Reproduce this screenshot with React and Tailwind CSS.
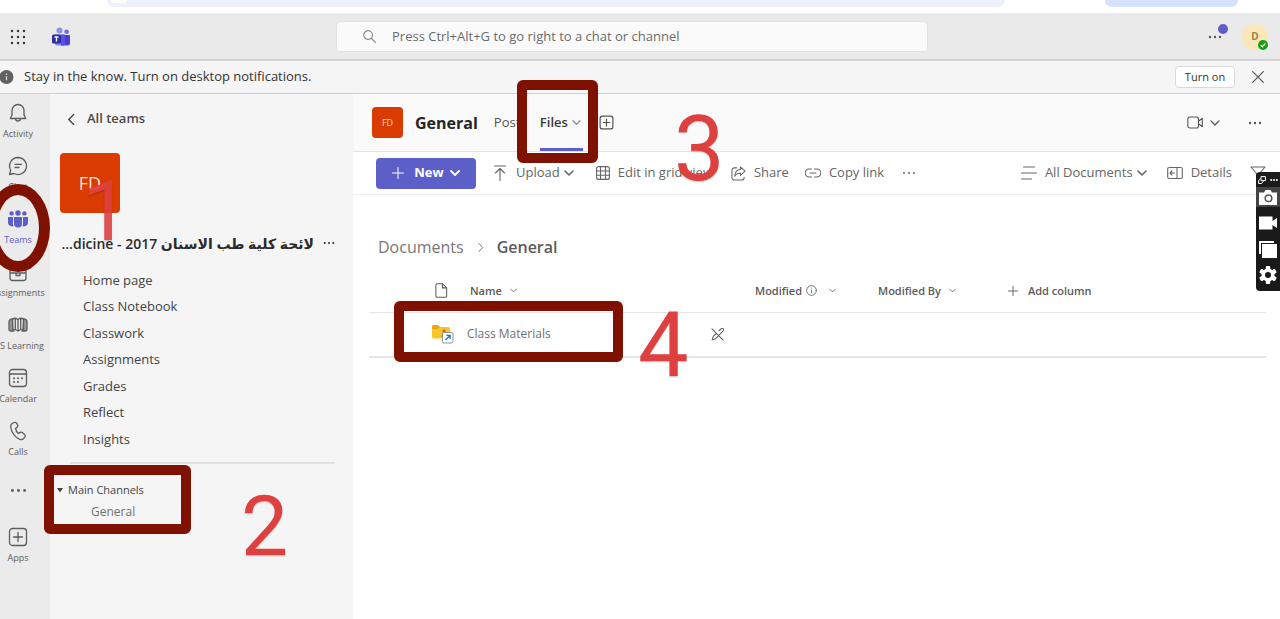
import clsx from "clsx";

const Icon = ({ size = 18, box = 20, sw = 1.2, className, children }) => (
    <svg
        width={size}
        height={size}
        viewBox={`0 0 ${box} ${box}`}
        fill="none"
        stroke="currentColor"
        strokeWidth={sw}
        strokeLinecap="round"
        strokeLinejoin="round"
        aria-hidden="true"
        className={clsx("shrink-0", className)}
    >
        {children}
    </svg>
)

const ChevronDown = ({ size = 10, sw = 1.2, className }) => (
    <Icon size={size} box={10} sw={sw} className={className}>
        <path d="M1 3l4 4 4-4"/>
    </Icon>
)

const Dots = ({ size = 14, r = 1.2, className }) => (
    <svg width={size} height={size} viewBox="0 0 14 14" fill="currentColor" aria-hidden="true"
         className={clsx("shrink-0", className)}>
        <circle cx="2" cy="7" r={r}/>
        <circle cx="7" cy="7" r={r}/>
        <circle cx="12" cy="7" r={r}/>
    </svg>
)

const PlusBox = ({ size, sw = 1.3 }) => (
    <Icon size={size} sw={sw}>
        <rect x="1.5" y="1.5" width="17" height="17" rx="3"/>
        <path d="M10 5.5v9M5.5 10h9"/>
    </Icon>
)

const WaffleIcon = () => (
    <svg width="16" height="16" viewBox="0 0 16 16" fill="#333" aria-hidden="true">
        {[2, 8, 14].map((y) => [2, 8, 14].map((x) => <circle key={`${x}-${y}`} cx={x} cy={y} r="1.2"/>))}
    </svg>
)

const TeamsLogo = () => (
    <svg width="18" height="19" viewBox="0 0 18 19" aria-hidden="true">
        <circle cx="7.5" cy="3.4" r="3" fill="#8b8ff0"/>
        <circle cx="14.6" cy="4.8" r="2.3" fill="#6a6ce8"/>
        <path d="M9 8h8a1 1 0 011 1v7a2.500 2.500 0 01-2.500 2.500H9z" fill="#4a3fd4"/>
        <path d="M3 7.500h9a1 1 0 011 1v8a2 2 0 01-2 2H5a2 2 0 01-2-2z" fill="#8a80f8"/>
        <path d="M9 7.500h3a1 1 0 011 1v8a2 2 0 01-2 2H9z" fill="#5b50e6"/>
        <rect x="0" y="7.500" width="9" height="9" rx="1.5" fill="#2c2f9e"/>
        <path d="M2.500 10h4M4.500 10v4.500" stroke="#fff" strokeWidth="1.4"/>
    </svg>
)

const rail = [
    {
        label: "Activity",
        icon: <path d="M10 1.500a6 6 0 00-6 6V12l-1.700 3.500h15.400L16 12V7.500a6 6 0 00-6-6zM7.500 15.500a2.500 2.500 0 005 0"/>,
    },
    {
        label: "Chat",
        icon: <path d="M10 1.500a8.500 8.500 0 11-4 16L1.500 18.500l1.200-4.300A8.500 8.500 0 0110 1.500zM7 8.300h6.500M7 11.500h4"/>,
    },
    {
        label: "Teams",
        active: true,
        icon: (
            <g fill="currentColor" stroke="none">
                <circle cx="10" cy="4" r="2.7"/>
                <circle cx="3.600" cy="4.400" r="2.200"/>
                <circle cx="16.400" cy="4.400" r="2.200"/>
                <path d="M6 8h8v6.500a4 4 0 01-8 0z"/>
                <path d="M0 8h5v6.500a5 5 0 00.5 2.500A3.900 3.900 0 010 13zM20 8h-5v6.500a5 5 0 01-.5 2.500A3.900 3.900 0 0020 13z"/>
            </g>
        ),
    },
    {
        label: "Assignments",
        icon: <path d="M4.500 1.500h11a2.500 2.500 0 012.500 2.500v12a2.500 2.500 0 01-2.500 2.500h-11A2.500 2.500 0 012 16V4a2.500 2.500 0 012.500-2.500zM2 11h16M8 11v2.500h4V11M6 5.500h8"/>,
    },
    {
        label: "MS Learning",
        icon: (
            <>
                <path d="M5 4a3 3 0 00-4 3v7a2 2 0 002 2h3M15 4a3 3 0 014 3v7a2 2 0 01-2 2h-3" fill="#999"/>
                <path d="M10 4.500C8 3 6 3 4.500 4v11c2-.7 4-.5 5.500 1 1.500-1.500 3.500-1.700 5.500-1V4C14 3 12 3 10 4.500zM10 4.500V16M7.300 4v10.500M12.700 4v10.500"/>
            </>
        ),
    },
    {
        label: "Calendar",
        icon: (
            <>
                <rect x="1.500" y="1.500" width="17" height="17" rx="3"/>
                <path d="M1.500 6h17"/>
                <path d="M6 10.200h.01M10 10.200h.01M14 10.200h.01M6 14h.01M10 14h.01" strokeWidth="2"/>
            </>
        ),
    },
    {
        label: "Calls",
        icon: <path d="M6.500 1.500l-1.800.6C3 2.700 2.500 4.500 2.800 6.500c1 5.500 4.500 9.800 9 11.800 1.500.6 3 .2 4-1l1-1.200c.6-.8.500-1.800-.2-2.500l-2.300-2c-.6-.5-1.400-.6-2.100-.2l-1.800 1C8.700 11 7.800 9.400 7.600 7.600l1.500-1.300c.6-.5.800-1.300.6-2l-.8-1.700c-.4-.9-1.400-1.400-2.400-1.100z"/>,
    },
]

const RailItem = ({ item }) => (
    <a href="#" className={clsx(
        "flex h-[53px] w-full flex-col items-center gap-[3px] whitespace-nowrap text-[9px] leading-4",
        item.active ? "text-[#5b5fc7]" : "text-[#5c5c5c]"
    )}>
        <Icon size={20} sw={1.3}>{item.icon}</Icon>
        <span>{item.label}</span>
    </a>
)

const Rail = () => (
    <nav className="w-[50px] shrink-0 overflow-hidden bg-[#ebebeb] pt-[9px]">
        <div className="flex w-9 flex-col items-center">
            {rail.map((item) => <RailItem key={item.label} item={item}/>)}
            <button type="button" aria-label="More apps" className="flex h-[53px] flex-col items-center pt-2 text-[#5c5c5c]">
                <Dots size={17}/>
            </button>
            <a href="#" className="flex flex-col items-center gap-[3px] text-[9px] leading-4 text-[#5c5c5c]">
                <PlusBox size={20}/>
                <span>Apps</span>
            </a>
        </div>
    </nav>
)

const pages = ["Home page", "Class Notebook", "Classwork", "Assignments", "Grades", "Reflect", "Insights"]

const Sidebar = () => (
    <aside className="w-[303px] shrink-0 bg-[#f5f5f5] pt-[13px]">
        <a href="#" className="flex h-6 items-center gap-[10px] pl-4 text-[13px] font-semibold text-[#4a4a4a]">
            <Icon size={11} box={10} sw={1.3}><path d="M7 0.500L2.500 5 7 9.500"/></Icon>
            All teams
        </a>
        <div className="mt-[22px] ml-[10px] flex size-[60px] items-center justify-center rounded-sm bg-[#da3b01] text-lg text-[#fbe3da]">
            FD
        </div>
        <div className="mt-[18px] flex h-6 items-center justify-between pr-[18px] pl-[14px] text-[#333]">
            <h2 dir="rtl" className="w-[250px] whitespace-nowrap text-[14px] font-semibold text-[#2b2b2b]">
                لائحة كلية طب الاسنان 2017 - dicine...
            </h2>
            <button type="button" aria-label="More options"><Dots size={12}/></button>
        </div>
        <ul className="mt-[13px] flex flex-col pl-[33px] text-[13px] text-[#444]">
            {pages.map((p) => (
                <li key={p} className="flex h-[26px] items-center even:mb-px">
                    <a href="#">{p}</a>
                </li>
            ))}
        </ul>
        <hr className="mt-[9px] mr-[18px] ml-5 border-t-2 border-[#e2e2e2]"/>
        <div className="mt-4 pl-[6px]">
            <button type="button" className="flex h-5 items-center gap-1 text-[11px] text-[#444]">
                <svg width="8" height="8" viewBox="0 0 8 8" fill="currentColor" aria-hidden="true"><path d="M1 2h6L4 6.500z"/></svg>
                Main Channels
            </button>
            <a href="#" className="ml-[35px] flex h-6 items-center text-[12px] text-[#707070]">General</a>
        </div>
    </aside>
)

const ChannelHeader = () => (
    <header className="flex h-[58px] items-center border-b border-[#e3e3e3] bg-[#fafafa] pr-[18px] pl-[19px] text-[#555]">
        <div className="flex size-[31px] items-center justify-center rounded-sm bg-[#da3b01] text-[9px] text-[#fbd5c7]">FD</div>
        <h1 className="ml-3 text-[16px] font-bold text-[#252525]">General</h1>
        <nav className="ml-4 flex h-full items-center text-[13px]">
            <a href="#" className="w-[46px]">Posts</a>
            <a href="#" className="flex h-full items-center gap-1 border-b-[3px] border-[#5b5fc7] pt-[3px] pr-[2px] font-semibold text-[#3a3a3a]">
                Files
                <ChevronDown size={9} className="text-[#777]"/>
            </a>
        </nav>
        <button type="button" aria-label="Add a tab" className="ml-4"><PlusBox size={15} sw={1.6}/></button>
        <button type="button" aria-label="Meet now" className="ml-auto flex items-center gap-[6px]">
            <Icon size={17} sw={1.3}>
                <rect x="1" y="3.500" width="12.500" height="13" rx="2.500"/>
                <path d="M13.500 8.500l4.500-3.500v10l-4.500-3.500"/>
            </Icon>
            <ChevronDown/>
        </button>
        <button type="button" aria-label="More options" className="ml-7"><Dots/></button>
    </header>
)

const Toolbar = () => (
    <div className="flex h-[43px] items-center whitespace-nowrap border-b border-[#efefef] bg-white pl-[23px] text-[13px] text-[#666]">
        <button type="button" className="flex h-[31px] w-[100px] items-center justify-center gap-[10px] rounded-sm bg-[#5b5fc7] font-bold text-white">
            <Icon size={12} box={12} sw={1}><path d="M6 0.500v11M0.500 6h11"/></Icon>
            New
            <ChevronDown sw={1.8} className="-ml-1"/>
        </button>
        <button type="button" className="ml-4 flex items-center gap-2">
            <Icon size={16} box={16} sw={1.1}><path d="M2.500 1h11M8 15.500V4M3.500 8L8 3.500 12.500 8"/></Icon>
            Upload
            <ChevronDown sw={1.6} className="-ml-1"/>
        </button>
        <button type="button" className="ml-[22px] flex items-center gap-2">
            <Icon size={14} box={14} sw={1.1}>
                <rect x="0.600" y="0.600" width="12.800" height="12.800" rx="2"/>
                <path d="M4.500 .6v12.800M9.500 .6v12.800M.6 5h12.800M.6 9.300h12.800"/>
            </Icon>
            Edit in grid view
        </button>
        <button type="button" className="ml-[18px] flex items-center gap-2">
            <Icon size={15} box={16} sw={1.1}>
                <path d="M6 2H3.500A2.500 2.500 0 001 4.500v8A2.500 2.500 0 003.500 15h8a2.500 2.500 0 002.500-2.500V12"/>
                <path d="M10 1l5 4.500-5 4.500V7.500C7 7.500 5.500 8.500 4 11c.2-4 2-7 6-7.300z"/>
            </Icon>
            Share
        </button>
        <button type="button" className="ml-4 flex items-center gap-2">
            <Icon size={16} box={16} sw={1.1}>
                <path d="M6.500 4H4.200a4 4 0 000 8h2.300M9.500 4h2.300a4 4 0 010 8H9.500M5 8h6"/>
            </Icon>
            Copy link
        </button>
        <button type="button" aria-label="More commands" className="ml-[18px]"><Dots r={1}/></button>
        <button type="button" className="ml-auto flex items-center gap-2">
            <Icon size={16} box={16} sw={1.1}><path d="M2.500 2h11M.5 8h15M.5 14h10"/></Icon>
            All Documents
            <ChevronDown sw={1.6} className="-ml-1"/>
        </button>
        <button type="button" className="ml-5 flex items-center gap-2">
            <Icon size={16} box={16} sw={1.1}>
                <rect x="0.700" y="2.500" width="14.600" height="11" rx="1.500"/>
                <path d="M10 2.500v11M7.500 8H3M5 6L3 8l2 2"/>
            </Icon>
            Details
        </button>
        <button type="button" aria-label="Filter" className="ml-[18px] mr-[14px]">
            <Icon size={16} box={16} sw={1.1}><path d="M1 2h14L9.500 8.500V14l-3-2V8.500z"/></Icon>
        </button>
    </div>
)

const FolderIcon = () => (
    <svg width="24" height="20" viewBox="0 0 24 20" aria-hidden="true">
        <path d="M1 2.500A1.500 1.500 0 012.500 1h4L9 3h8.500A1.500 1.500 0 0119 4.500V13a1.500 1.500 0 01-1.500 1.500h-15A1.500 1.500 0 011 13z" fill="#fbc62b"/>
        <path d="M1 2.500A1.500 1.500 0 012.500 1h4L9 3 7 5H1z" fill="#eba616"/>
        <circle cx="13" cy="7" r="1.700" fill="#b87a12"/>
        <path d="M10.500 13c0-5 5-5 5 0z" fill="#b87a12"/>
        <rect x="11.500" y="8.500" width="10.500" height="10.500" rx="1.500" fill="#fff" stroke="#8c9299"/>
        <path d="M14.500 16l4.500-4.500M15.500 11.300h3.700V15" stroke="#2573b8" strokeWidth="1.300" fill="none"/>
    </svg>
)

const FileList = () => (
    <section className="pr-[14px] pl-4">
        <nav aria-label="Breadcrumb" className="mt-10 flex h-6 items-center gap-3 pl-[9px] text-[16px] text-[#777]">
            <a href="#">Documents</a>
            <Icon size={9} box={10} sw={1.1}><path d="M3 .5L7.500 5 3 9.500"/></Icon>
            <span className="font-semibold text-[#5a5a5a]">General</span>
        </nav>
        <table className="mt-[11px] w-full table-fixed text-left text-[11px] text-[#5a5a5a]">
            <thead>
                <tr className="h-[42px] border-b border-[#e6e6e6]">
                    <th className="w-[98px] pl-[65px]">
                        <Icon size={15} box={16} sw={1.100}>
                            <path d="M3.500 .7h5.500l4.500 4.500v8.600a1.500 1.500 0 01-1.500 1.500H3.500A1.500 1.500 0 012 13.800V2.200A1.500 1.500 0 013.500 .7zM9 .7v4.500h4.500"/>
                        </Icon>
                    </th>
                    <th className="w-[240px] pl-[3px] font-semibold">
                        <span className="flex items-center gap-2">Name <ChevronDown size={7}/></span>
                    </th>
                    <th className="w-12"><span className="sr-only">Editing</span></th>
                    <th className="w-[123px] font-semibold">
                        <span className="flex items-center gap-1">
                            Modified
                            <Icon size={11} box={12} sw={0.9}><circle cx="6" cy="6" r="5.300"/><path d="M6 5.500v3M6 3.500h.01"/></Icon>
                            <ChevronDown size={7} className="ml-2"/>
                        </span>
                    </th>
                    <th className="w-[130px] font-semibold">
                        <span className="flex items-center gap-2">Modified By <ChevronDown size={7}/></span>
                    </th>
                    <th className="font-semibold">
                        <button type="button" className="flex items-center gap-[10px]">
                            <Icon size={10} box={10} sw={0.9}><path d="M5 .5v9M.5 5h9"/></Icon>
                            Add column
                        </button>
                    </th>
                </tr>
            </thead>
            <tbody>
                <tr className="h-[45px] border-b-2 border-[#e6e6e6]">
                    <td className="pl-[62px]"><FolderIcon/></td>
                    <td className="text-[12px] text-[#707070]"><a href="#">Class Materials</a></td>
                    <td>
                        <Icon size={13} box={14} sw={1.1} className="ml-1">
                            <path d="M1 1l12 12M8.500 3L11 .8a1.500 1.500 0 012.200 2.200L5 11.500 1.200 12.800 2.500 9 5.500 6"/>
                        </Icon>
                    </td>
                    <td/>
                    <td/>
                    <td/>
                </tr>
            </tbody>
        </table>
    </section>
)

const Recorder = () => (
    <div className="absolute top-[172px] right-0 flex w-6 flex-col items-center rounded-l-sm bg-[#1a1a1a] pb-1 text-white">
        <div className="flex h-[15px] items-center gap-1">
            <svg width="8" height="8" viewBox="0 0 8 8" fill="none" stroke="currentColor" aria-hidden="true"><path d="M3 .6h4.400v4H3zM3 2.500L.6 4.500v3h3L5.500 5"/></svg>
            <Dots size={8} r={1.8}/>
        </div>
        <button type="button" aria-label="Take a photo" className="flex h-5 w-full items-center justify-center bg-[#444]">
            <svg width="18" height="15" viewBox="0 0 18 15" aria-hidden="true">
                <path d="M0 2.500h5L6.500 0h5L13 2.500h5V15H0z" fill="#fff"/>
                <circle cx="9.500" cy="8.300" r="3.300" fill="#fff" stroke="#555" strokeWidth="1.500"/>
            </svg>
        </button>
        <button type="button" aria-label="Record video" className="flex h-8 items-center">
            <svg width="18" height="14" viewBox="0 0 18 14" fill="#fff" aria-hidden="true"><path d="M0 .5h13.500V5L18 2v10l-4.500-3v4.500H0z"/></svg>
        </button>
        <button type="button" aria-label="Gallery" className="flex h-5 items-center">
            <svg width="18" height="17" viewBox="0 0 18 17" fill="#fff" aria-hidden="true">
                <path d="M0 0h15v2H2v11H0z"/>
                <rect x="3" y="3" width="15" height="14"/>
            </svg>
        </button>
        <button type="button" aria-label="Settings" className="flex h-7 items-center pt-1">
            <svg width="18" height="18" viewBox="0 0 18 18" aria-hidden="true">
                <g fill="#fff">
                    <circle cx="9" cy="9" r="6.500"/>
                    {[0, 60, 120].map((a) => <rect key={a} x="6.800" y="0" width="4.400" height="18" rx="1" transform={`rotate(${a} 9 9)`}/>)}
                </g>
                <circle cx="9" cy="9" r="3" fill="#1a1a1a"/>
            </svg>
        </button>
    </div>
)

const Marks = () => (
    <div className="pointer-events-none absolute inset-0 font-[Roboto,sans-serif] text-[#de4040]">
        <div className="absolute top-[184px] -left-[14px] h-[88px] w-16 rounded-[50%] border-[11px] border-[#7f1100]"/>
        <div className="absolute top-[465px] left-11 h-[69px] w-[147px] rounded-md border-10 border-[#7f1100]"/>
        <div className="absolute top-20 left-[517px] h-[83px] w-[81px] rounded-md border-10 border-[#7f1100]"/>
        <div className="absolute top-[301px] left-[394px] h-[61px] w-[229px] rounded-md border-10 border-[#7f1100]"/>
        <span className="absolute top-[170px] left-[82px] text-[84px] leading-[84px] opacity-90 text-shadow-sm">1</span>
        <span className="absolute top-[485px] left-[241px] text-[84px] leading-[84px] text-shadow-sm">2</span>
        <span className="absolute top-[105px] left-[674px] text-[90px] leading-[90px] text-shadow-sm">3</span>
        <span className="absolute top-[301px] left-[638px] text-[90px] leading-[90px] text-shadow-sm">4</span>
    </div>
)

const App = () => (
    <div className="relative flex min-h-screen flex-col overflow-hidden bg-white font-['Open_Sans','DejaVu_Sans',sans-serif]">
        <div className="flex h-[13px] shrink-0 items-start bg-white pr-[42px] pl-[107px]">
            <div className="h-[7px] grow rounded-b-xl bg-[#edf1fb] pl-1">
                <div className="h-[3px] w-4 rounded-b-full bg-white"/>
            </div>
            <div className="ml-[100px] h-[7px] w-[133px] rounded-b-xl bg-[#d3e3fd]"/>
        </div>

        <header className="flex h-12 shrink-0 items-center border-b-2 border-[#d6d6d6] bg-[#eaeaea] pt-px pr-3 pl-[10px]">
            <button type="button" aria-label="App launcher"><WaffleIcon/></button>
            <a href="#" aria-label="Teams" className="ml-[26px]"><TeamsLogo/></a>
            <div className="flex grow justify-center pr-[14px]">
                <label className="flex h-[31px] w-[592px] items-center gap-4 rounded-sm border border-[#e2e2e2] bg-[#fafafa] pl-[26px] text-[#777]">
                    <Icon size={13} box={14} sw={1.1}><circle cx="5.500" cy="5.500" r="4.700"/><path d="M9 9l4.300 4.300"/></Icon>
                    <input
                        type="text"
                        aria-label="Search"
                        placeholder="Press Ctrl+Alt+G to go right to a chat or channel"
                        className="grow bg-transparent text-[13px] outline-none placeholder:text-[#6b6b6b]"
                    />
                </label>
            </div>
            <button type="button" aria-label="Settings and more" className="relative text-[#555]">
                <Dots/>
                <span className="absolute -top-[6px] left-[10px] size-[10px] rounded-full bg-[#5b5fc7]"/>
            </button>
            <button type="button" className="relative ml-5 flex size-[26px] items-center justify-center rounded-full bg-[#fbe8b8] text-[10px] font-bold text-[#a0804a]">
                D
                <svg width="10" height="10" viewBox="0 0 10 10" aria-hidden="true" className="absolute right-0 bottom-0">
                    <circle cx="5" cy="5" r="5" fill="#13a10e"/>
                    <path d="M2.700 5.200l1.600 1.600 3-3.300" fill="none" stroke="#fff" strokeWidth="1.200"/>
                </svg>
            </button>
        </header>

        <div className="flex h-[33px] shrink-0 items-center border-b border-[#cfcfcf] bg-[#f5f5f5] pr-4 text-[13px] text-[#333]">
            <svg width="14" height="14" viewBox="0 0 14 14" aria-hidden="true">
                <circle cx="6.500" cy="7" r="7" fill="#616161"/>
                <path d="M6.500 6.300v4M6.500 3.500v1.400" stroke="#d8d8d8" strokeWidth="1.300"/>
            </svg>
            <span className="ml-[10px]">Stay in the know. Turn on desktop notifications.</span>
            <button type="button" className="ml-auto h-[22px] w-[60px] rounded-sm border border-[#d9d9d9] bg-white text-[11px]">Turn on</button>
            <button type="button" aria-label="Dismiss" className="ml-[17px] text-[#555]">
                <Icon size={12} box={12} sw={1.200}><path d="M.7 .7l10.600 10.600M11.300 .7L.7 11.300"/></Icon>
            </button>
        </div>

        <div className="flex grow">
            <Rail/>
            <Sidebar/>
            <main className="min-w-0 grow bg-white">
                <ChannelHeader/>
                <Toolbar/>
                <FileList/>
            </main>
        </div>

        <Recorder/>
        <Marks/>
    </div>
)

export default App
